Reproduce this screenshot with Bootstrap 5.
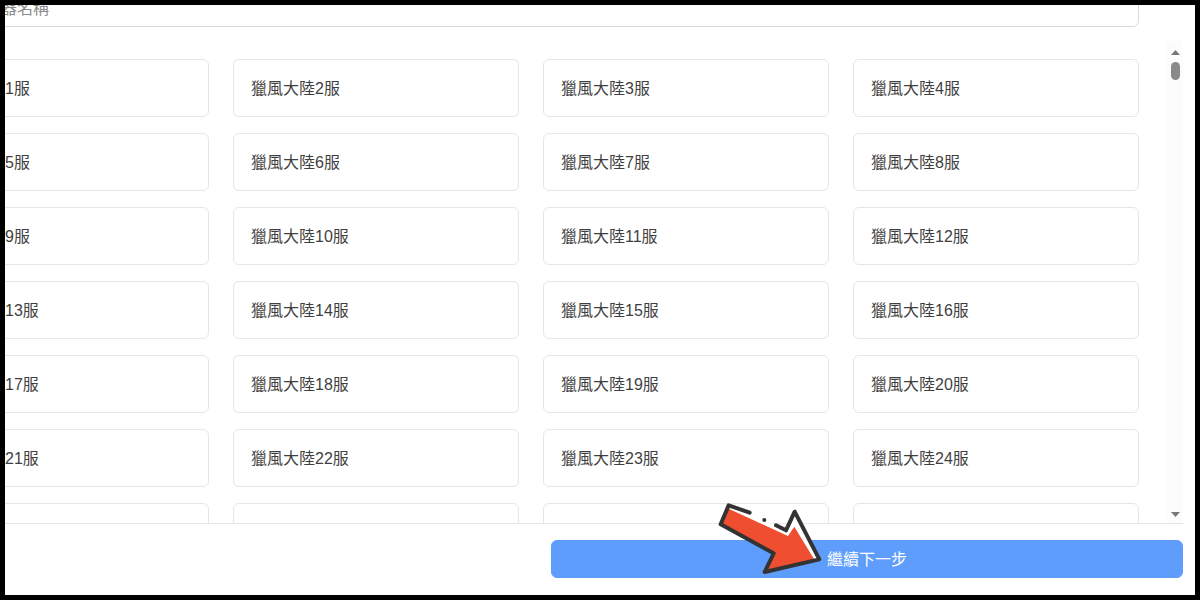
<!DOCTYPE html>
<html lang="zh-Hant">
<head>
<meta charset="utf-8">
<title>選擇伺服器</title>
<link href="https://cdn.jsdelivr.net/npm/bootstrap@5.3.0/dist/css/bootstrap.min.css" rel="stylesheet">
<script src="https://cdn.jsdelivr.net/npm/bootstrap@5.3.0/dist/js/bootstrap.bundle.min.js"></script>
<style>
html, body { height: 100%; overflow: hidden; }
body { background: #000; padding: 5px; font-family: "Liberation Sans", "Noto Sans CJK TC", sans-serif; color: #3f3f3f; }
.frame-box { width: 1190px; height: 590px; background: #fff; position: relative; overflow: hidden; }
.search-clip { height: 22px; overflow: hidden; flex: none; }
.search-input { width: 1216px; height: 38px; margin: -16px 0 0 -82px; padding: 8px 12px 6px 45px; border-color: #d9d9d9; border-radius: 6px; font-size: 16px; }
.search-input::placeholder { color: #8c8c8c; }
.list-zone { height: 497px; margin-right: 12px; border-bottom: 1px solid #e6e6e6; flex: none; }
.list-view { width: 1162px; overflow: hidden; padding-top: 32px; }
.server-grid { display: grid; grid-template-columns: repeat(4, 286px); gap: 16px 24px; margin-left: -82px; width: 1216px; }
.server-tile { height: 58px; padding: 1px 17px 0; border: 1px solid #e6e6e6; border-radius: 6px; font-size: 16px; line-height: 56px; color: #3f3f3f; white-space: nowrap; }
.fake-track { width: 16px; margin-top: 14px; background: #fcfcfc; align-items: center; padding-top: 9px; padding-bottom: 6px; }
.tri { width: 9px; height: 5px; flex: none; display: block; }
.fake-thumb { width: 9px; height: 18px; margin-top: 7px; background: #8a8a8a; border-radius: 5px; flex: none; }
.next-bar { padding: 16px 12px 0 0; }
.next-btn { width: 632px; height: 38px; padding: 1px 0 0; background: #5e9dfb; border-color: #5e9dfb; color: #fff; border-radius: 6px; font-size: 16px; }
.pointer-arrow { position: absolute; left: 707px; top: 491px; width: 116px; height: 84px; }
</style>
</head>
<body>
<div class="frame-box d-flex flex-column">
  <div class="search-clip">
    <input class="form-control search-input" type="text" placeholder="伺服器名稱">
  </div>
  <div class="list-zone d-flex">
    <div class="list-view">
      <div class="server-grid">
        <div class="server-tile">獵風大陸1服</div><div class="server-tile">獵風大陸2服</div><div class="server-tile">獵風大陸3服</div><div class="server-tile">獵風大陸4服</div>
        <div class="server-tile">獵風大陸5服</div><div class="server-tile">獵風大陸6服</div><div class="server-tile">獵風大陸7服</div><div class="server-tile">獵風大陸8服</div>
        <div class="server-tile">獵風大陸9服</div><div class="server-tile">獵風大陸10服</div><div class="server-tile">獵風大陸11服</div><div class="server-tile">獵風大陸12服</div>
        <div class="server-tile">獵風大陸13服</div><div class="server-tile">獵風大陸14服</div><div class="server-tile">獵風大陸15服</div><div class="server-tile">獵風大陸16服</div>
        <div class="server-tile">獵風大陸17服</div><div class="server-tile">獵風大陸18服</div><div class="server-tile">獵風大陸19服</div><div class="server-tile">獵風大陸20服</div>
        <div class="server-tile">獵風大陸21服</div><div class="server-tile">獵風大陸22服</div><div class="server-tile">獵風大陸23服</div><div class="server-tile">獵風大陸24服</div>
        <div class="server-tile">獵風大陸25服</div><div class="server-tile">獵風大陸26服</div><div class="server-tile">獵風大陸27服</div><div class="server-tile">獵風大陸28服</div>
      </div>
    </div>
    <div class="ms-auto fake-track d-flex flex-column">
      <svg class="tri" viewBox="0 0 9 5"><path d="M4.5 0L9 5H0Z" fill="#777"/></svg>
      <div class="fake-thumb"></div>
      <svg class="tri mt-auto" viewBox="0 0 9 5"><path d="M0 0H9L4.5 5Z" fill="#777"/></svg>
    </div>
  </div>
  <div class="next-bar d-flex justify-content-end">
    <button type="button" class="btn next-btn">繼續下一步</button>
  </div>
  <svg class="pointer-arrow" viewBox="0 0 348 252" aria-hidden="true">
    <path d="M50 28L26 85L185 172L158 228L322 190L248 47L222 103L50 28Z" fill="#fff"/>
    <path d="M50 38L26 85L185 172L158 228L310 196L247 92L228 120Z" fill="#f04e30"/>
    <path d="M113 50L50 28L26 85L185 172L158 228L322 190L248 47L222 103L192 88" fill="none" stroke="#333" stroke-width="12" stroke-linejoin="round" stroke-linecap="round"/>
    <circle cx="157" cy="72" r="6" fill="#333"/>
  </svg>
</div>
</body>
</html>
